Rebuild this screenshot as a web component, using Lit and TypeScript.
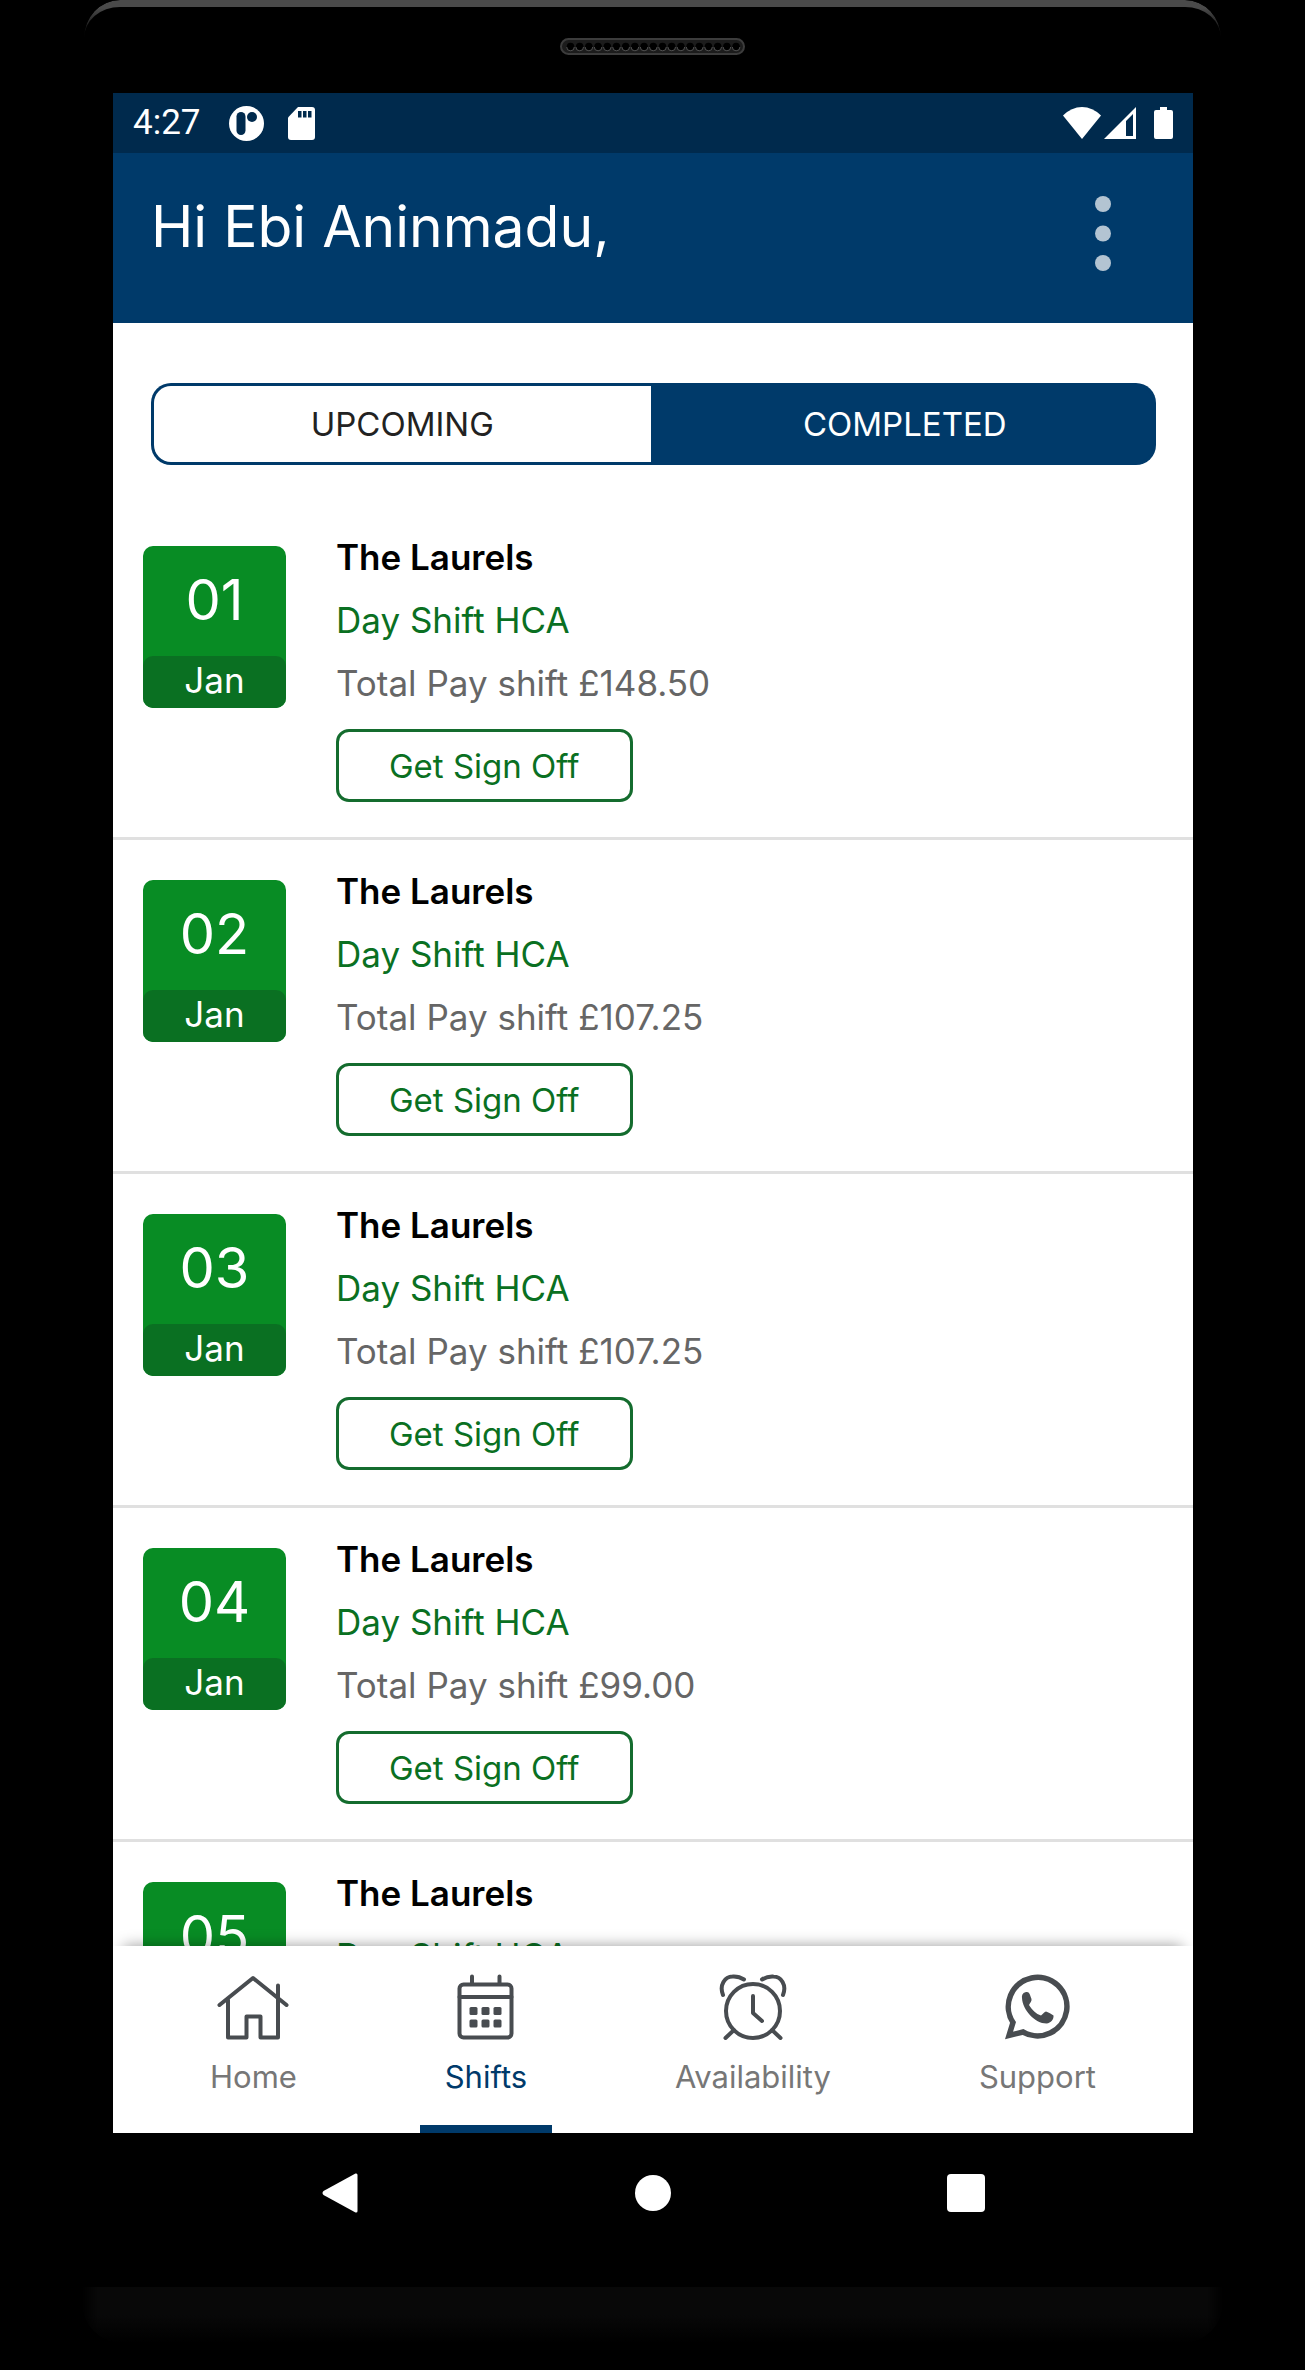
import { LitElement, html, svg, css } from "lit";
import { customElement, property, state } from "lit/decorators.js";
import { classMap } from "lit/directives/class-map.js";

interface Shift {
  day: string;
  month: string;
  place: string;
  role: string;
  pay: string;
}

type Tab = "UPCOMING" | "COMPLETED";

const shift = (day: string, pay: string): Shift => ({
  day,
  month: "Jan",
  place: "The Laurels",
  role: "Day Shift HCA",
  pay,
});

const SHIFTS: Shift[] = [
  shift("01", "148.50"),
  shift("02", "107.25"),
  shift("03", "107.25"),
  shift("04", "99.00"),
  shift("05", "99.00"),
];

const homeIcon = html`
  <svg class="icon" width="72" height="66" viewBox="0 0 72 66" aria-hidden="true">
    <path d="M2.5 31 36 4 69.5 31" />
    <path d="M11 26V63.5H29.5V42.5H43.5V63.5H61V11.5" />
  </svg>`;

const calendarIcon = html`
  <svg class="icon" width="57" height="66" viewBox="0 0 57 66" aria-hidden="true">
    <rect x="2.5" y="10.5" width="52" height="53" rx="4" />
    <path d="M2.5 23H54.5M15 2.5V10M42.5 2.5V10" />
    <g class="solid">
      ${[33, 45.5].map((y) =>
        [12.5, 24.5, 36.5].map(
          (x) => svg`<rect x=${x} y=${y} width="8" height="8" rx="1.5" />`,
        ),
      )}
    </g>
  </svg>`;

const alarmIcon = html`
  <svg class="icon" width="68" height="66" viewBox="0 0 68 66" aria-hidden="true">
    <circle cx="34" cy="37" r="27" />
    <path d="M34 22V39L43 47M15 56 6.5 64M53 56 61.5 64" />
    <path d="M4 21C0 11 6 2.5 13.5 2.5C18 2.2 22 3.5 25 5.5" />
    <path d="M64 21C68 11 62 2.5 54.5 2.5C50 2.2 46 3.5 43 5.5" />
  </svg>`;

const chatIcon = html`
  <svg class="icon heavy" width="65" height="66" viewBox="0 0 65 66" aria-hidden="true">
    <path class="sharp" d="M4 61.5 8 48.5A29.3 29.3 0 1 1 18 58Z" />
    <path
      class="solid"
      d="M17 24C16.5 20 19 18 22 18C24.5 18 25 21 26.5 25C27 27 25 29 24 31C27 36 31 40 36 41.5C38 40 39.5 37.5 41 37.5C43 38 47 40.5 48.5 41.5C49 45 46 49 41.5 49.5C30 49.5 17.5 36 17 24Z"
    />
  </svg>`;

const NAV = [
  { label: "Home", icon: homeIcon },
  { label: "Shifts", icon: calendarIcon },
  { label: "Availability", icon: alarmIcon },
  { label: "Support", icon: chatIcon },
];

@customElement("shift-row")
export class ShiftRow extends LitElement {
  @property({ attribute: false }) shift!: Shift;

  static styles = css`
    :host {
      display: flex;
      flex: none;
      align-items: flex-start;
      gap: 50px;
      padding: 20px 30px 35px;
      border-bottom: 3px solid #e0e0e0;
      font-size: 35px;
      line-height: 63px;
    }
    .date {
      flex: none;
      width: 143px;
      margin-top: 20px;
      border-radius: 10px;
      background: #088c24;
      color: #fff;
      text-align: center;
    }
    .day {
      display: block;
      font-size: 56px;
      line-height: 108px;
      padding-bottom: 2px;
    }
    .month {
      display: block;
      padding-bottom: 4px;
      border-radius: 10px;
      background: #0a7022;
      line-height: 48px;
    }
    .details {
      flex: 1;
      min-width: 0;
    }
    .place,
    .role,
    .pay {
      margin: 0;
      font-size: 35px;
      font-weight: 400;
    }
    .place {
      color: #000;
      font-weight: 600;
    }
    .role {
      color: #0a7022;
    }
    .pay {
      color: #666;
    }
    .sign-off {
      display: block;
      min-width: 296px;
      height: 73px;
      margin-top: 14px;
      padding: 0 50px;
      border: 3px solid #146c2e;
      border-radius: 13px;
      background: #fff;
      color: #0a7022;
      font: inherit;
      font-size: 33px;
      line-height: 64px;
    }
  `;

  render() {
    const s = this.shift;
    return html`
      <div class="date">
        <span class="day">${s.day}</span>
        <span class="month">${s.month}</span>
      </div>
      <div class="details">
        <h2 class="place">${s.place}</h2>
        <p class="role">${s.role}</p>
        <p class="pay">Total Pay shift £${s.pay}</p>
        <button class="sign-off" type="button">Get Sign Off</button>
      </div>
    `;
  }
}

@customElement("app-root")
export class AppRoot extends LitElement {
  @state() private tab: Tab = "COMPLETED";
  @state() private page = "Shifts";

  static styles = css`
    :host {
      display: flex;
      flex-direction: column;
      box-sizing: border-box;
      height: 100vh;
      background: #000;
      font-family: Inter, "Liberation Sans", sans-serif;
    }
    *,
    *::before {
      box-sizing: border-box;
    }
    button {
      margin: 0;
      padding: 0;
      border: 0;
      background: none;
      font: inherit;
      color: inherit;
      cursor: pointer;
    }
    svg {
      display: block;
    }

    .top-bezel {
      flex: none;
      height: 93px;
      padding: 0 84px;
    }
    .rim {
      height: 38px;
      border-top: 7px solid #4a4a4a;
      border-radius: 36px 36px 0 0 / 38px 38px 0 0;
      mask-image: linear-gradient(#000 8px, transparent);
    }
    .speaker {
      margin: 0 auto;
    }

    .screen {
      display: flex;
      flex: 1;
      flex-direction: column;
      min-height: 0;
      margin: 0 112px 0 113px;
      background: #fff;
    }
    .status {
      display: flex;
      flex: none;
      align-items: center;
      height: 60px;
      padding: 0 20px;
      background: #002a4d;
      color: #fff;
      font-family: Roboto, sans-serif;
      font-size: 35px;
      line-height: 60px;
    }
    .notices {
      display: flex;
      flex: 1;
      align-items: center;
      gap: 24px;
      margin-left: 28px;
    }
    .signals {
      display: flex;
      align-items: center;
      gap: 3px;
    }
    .battery {
      margin-left: 15px;
    }

    .greeting-bar {
      display: flex;
      flex: none;
      align-items: flex-start;
      justify-content: space-between;
      height: 170px;
      padding: 42px 42px 0 38px;
      background: #003a6a;
      color: #fff;
    }
    .greeting {
      margin: 0;
      font-size: 57px;
      font-weight: 400;
      line-height: 64px;
    }
    .more {
      display: flex;
      justify-content: center;
      width: 96px;
    }

    .tabs {
      display: flex;
      flex: none;
      gap: 6px;
      height: 82px;
      margin: 60px 37px 41px 38px;
      padding: 3px;
      border-radius: 20px;
      background: #003a6a;
    }
    .tab {
      flex: 1;
      border-radius: 17px 0 0 17px;
      background: #fff;
      color: #222;
      font-size: 33px;
    }
    .tab:last-child {
      border-radius: 0 17px 17px 0;
    }
    .tab.on {
      background: #003a6a;
      color: #fff;
    }

    .list {
      display: flex;
      flex: 1;
      flex-direction: column;
      min-height: 0;
      overflow: hidden;
    }

    .nav {
      display: flex;
      flex: none;
      justify-content: space-between;
      height: 187px;
      padding: 0 72px;
      background: #fff;
      box-shadow: 0 -11px 14px -11px rgba(0, 0, 0, 0.4);
      z-index: 1;
    }
    .nav-item {
      display: flex;
      flex-direction: column;
      align-items: center;
      gap: 17px;
      padding: 28px 25px 0;
      border-bottom: 8px solid transparent;
      color: #777;
      font-size: 31px;
      line-height: 40px;
    }
    .nav-item.on {
      border-bottom-color: #003a6a;
      color: #003a6a;
    }
    .icon {
      flex: none;
      fill: none;
      stroke: #484c50;
      stroke-width: 4;
      stroke-linecap: round;
      stroke-linejoin: round;
    }
    .icon.heavy {
      stroke-width: 5.5;
    }
    .icon .sharp {
      stroke-linejoin: miter;
    }
    .icon .solid {
      fill: #484c50;
      stroke: none;
    }

    .system {
      display: grid;
      flex: none;
      grid-template-columns: repeat(3, 1fr);
      height: 120px;
      margin: 0 112px 0 113px;
      padding: 0 70px;
    }
    .system button {
      display: grid;
      place-items: center;
    }
    .chin {
      flex: none;
      height: 56px;
      margin: 34px 82px 27px;
      border-radius: 0 0 40px 40px;
      background: linear-gradient(#080808 50%, #000);
      mask-image: linear-gradient(
        90deg,
        transparent,
        #000 16px,
        #000 calc(100% - 16px),
        transparent
      );
    }
  `;

  private renderStatus() {
    return html`
      <div class="status">
        <span>4:27</span>
        <div class="notices">
          <svg width="35" height="35" viewBox="0 0 35 35" aria-hidden="true">
            <circle cx="17.5" cy="17.5" r="17.5" fill="#fff" />
            <rect x="7.5" y="6" width="9" height="23" rx="4.5" fill="#002a4d" />
            <circle cx="23" cy="11" r="5" fill="#002a4d" />
          </svg>
          <svg width="27" height="33" viewBox="0 0 27 33" aria-hidden="true">
            <path
              fill="#fff"
              d="M10 0H24Q27 0 27 3V30Q27 33 24 33H3Q0 33 0 30V10.5Z"
            />
            <path fill="#002a4d" d="M10 4h3.5v6.5h-3.5zM15 4h3.5v6.5h-3.5zM20 4h3.5v6.5h-3.5z" />
          </svg>
        </div>
        <div class="signals">
          <svg width="38" height="32" viewBox="0 0 38 32" aria-hidden="true">
            <path fill="#fff" d="M0 8.5Q8.5 0 19 0T38 8.5L19 32Z" />
          </svg>
          <svg width="32" height="32" viewBox="0 0 32 32" aria-hidden="true">
            <path
              fill="#fff"
              fill-rule="evenodd"
              d="M32 0V32H0ZM22 14V29H29V7Z"
            />
          </svg>
          <svg class="battery" width="19" height="32" viewBox="0 0 19 32" aria-hidden="true">
            <path
              fill="#fff"
              d="M6 0H13V3H17Q19 3 19 5V30Q19 32 17 32H2Q0 32 0 30V5Q0 3 2 3H6Z"
            />
          </svg>
        </div>
      </div>
    `;
  }

  private renderSpeaker() {
    const holes = Array.from({ length: 19 }, (_, i) => 10.5 + i * 9.2);
    return html`
      <svg class="speaker" width="185" height="17" viewBox="0 0 185 17" aria-hidden="true">
        <rect x="1" y="1" width="183" height="15" rx="7.5" fill="#1c1c1c" stroke="#3c3c3c" stroke-width="2" />
        ${holes.map(
          (x) => svg`
            <circle cx=${x} cy="8.5" r="3.8" fill="#000" />
            <path d="M${x - 3.8} 9a3.8 3.8 0 0 0 7.6 0" fill="none" stroke="#505050" />`,
        )}
      </svg>
    `;
  }

  render() {
    return html`
      <div class="top-bezel">
        <div class="rim"></div>
        ${this.renderSpeaker()}
      </div>

      <div class="screen">
        ${this.renderStatus()}
        <header class="greeting-bar">
          <h1 class="greeting">Hi Ebi Aninmadu,</h1>
          <button class="more" type="button" aria-label="More options">
            <svg width="16" height="76" viewBox="0 0 16 76" fill="#b3c4d2" aria-hidden="true">
              <circle cx="8" cy="9" r="8" />
              <circle cx="8" cy="38.5" r="8" />
              <circle cx="8" cy="68" r="8" />
            </svg>
          </button>
        </header>

        <div class="tabs" role="tablist">
          ${(["UPCOMING", "COMPLETED"] as Tab[]).map(
            (t) => html`
              <button
                class=${classMap({ tab: true, on: t === this.tab })}
                type="button"
                role="tab"
                aria-selected=${t === this.tab ? "true" : "false"}
                @click=${() => (this.tab = t)}
              >${t}</button>
            `,
          )}
        </div>

        <main class="list">
          ${SHIFTS.map((s) => html`<shift-row .shift=${s}></shift-row>`)}
        </main>

        <nav class="nav">
          ${NAV.map(
            (n) => html`
              <button
                class=${classMap({ "nav-item": true, on: n.label === this.page })}
                type="button"
                @click=${() => (this.page = n.label)}
              >
                ${n.icon}
                <span>${n.label}</span>
              </button>
            `,
          )}
        </nav>
      </div>

      <div class="system">
        <button type="button" aria-label="Back">
          <svg width="36" height="40" viewBox="0 0 36 40" fill="#fff" aria-hidden="true">
            <path d="M33.5 .5Q35.5 0 35.5 2V38Q35.5 40 33.5 39.5L1.5 22Q-.5 20 1.5 18Z" />
          </svg>
        </button>
        <button type="button" aria-label="Home screen">
          <svg width="36" height="36" viewBox="0 0 36 36" fill="#fff" aria-hidden="true">
            <circle cx="18" cy="18" r="18" />
          </svg>
        </button>
        <button type="button" aria-label="Recent apps">
          <svg width="38" height="38" viewBox="0 0 38 38" fill="#fff" aria-hidden="true">
            <rect width="38" height="38" rx="4" />
          </svg>
        </button>
      </div>
      <div class="chin"></div>
    `;
  }
}
